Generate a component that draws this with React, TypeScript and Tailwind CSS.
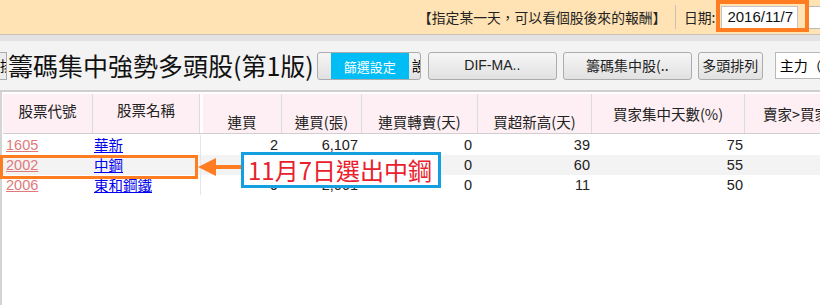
import React from "react";

const cjk = '"Noto Sans CJK TC", "Noto Sans CJK SC", sans-serif';
const num = '"Liberation Sans", "Noto Sans CJK TC", sans-serif';

const cols = "grid grid-cols-[90px_107px_3px_79px_80px_116px_114px_153px_1fr]";

function Btn({ children, w }: { children: React.ReactNode; w: string }) {
  return (
    <div
      className={`${w} shrink-0 h-[28px] flex items-center justify-center rounded-[3px] border border-[#acacac] bg-gradient-to-b from-[#f6f6f6] to-[#e1e1e1] text-[14px] text-[#222] whitespace-nowrap`}
      style={{ fontFamily: num }}
    >
      {children}
    </div>
  );
}

type Row = { code: string; name: string; a: string; b: string; c: string; d: string; e: string; bg: string };
const rows: Row[] = [
  { code: "1605", name: "華新", a: "2", b: "6,107", c: "0", d: "39", e: "75", bg: "bg-white" },
  { code: "2002", name: "中鋼", a: "", b: "", c: "0", d: "60", e: "55", bg: "bg-[#f3f3f3]" },
  { code: "2006", name: "東和鋼鐵", a: "9", b: "2,061", c: "0", d: "11", e: "50", bg: "bg-white" },
];

export default function App() {
  return (
    <div className="w-[820px] h-[305px] overflow-hidden bg-white relative" style={{ fontFamily: cjk }}>
      {/* top bar */}
      <div className="h-[35px] bg-[#ffe3b4] border-b border-[#c9c2b4] flex items-center pl-[418px] relative">
        <span className="text-[13.8px] text-[#222] whitespace-nowrap w-[248px] shrink-0">【指定某一天，可以看個股後來的報酬】</span>
        <div className="w-px h-[24px] bg-[#c9c2b4] ml-[9px] shrink-0" />
        <span className="text-[13.8px] text-[#222] ml-[8px] whitespace-nowrap shrink-0">日期:</span>
        <div className="ml-[6px] w-[77px] h-[23px] bg-white border border-[#c4c4c4] flex items-center pl-[5px] text-[15px] text-[#111] whitespace-nowrap shrink-0" style={{ fontFamily: num }}>
          2016/11/7
        </div>
        <div className="ml-[9px] w-[40px] h-[23px] bg-white border border-[#b9b9b9] shrink-0" />
        <div className="absolute left-[716px] top-0 w-[93px] h-[32px] border-[4px] border-[#ff7c20]" />
      </div>
      <div className="h-[6px] bg-[#e2e2e2]" />
      {/* toolbar */}
      <div className="h-[49px] bg-[#f3f3f3] flex items-center relative">
        <div className="w-[7px] shrink-0 h-[28px] overflow-hidden border border-l-0 border-[#acacac] bg-[#ececec] flex items-center justify-end">
          <span className="text-[14px] shrink-0 mr-[-8px]">排</span>
        </div>
        <span className="ml-[1px] shrink-0 text-[25px] leading-none text-[#111] whitespace-nowrap">籌碼集中強勢多頭股(第1版)</span>
        <div className="ml-[3px] shrink-0 w-[104px] h-[28px] rounded-[3px] border border-[#acacac] bg-gradient-to-b from-[#f6f6f6] to-[#e1e1e1] relative overflow-hidden flex items-center justify-end">
          <span className="text-[14px] mr-[-6px]">設</span>
          <div className="absolute left-[13px] top-0 w-[78px] h-[28px] bg-[#00bdf6] flex items-center justify-center text-white text-[13px] whitespace-nowrap">篩選設定</div>
        </div>
        <div className="ml-[7px] shrink-0"><Btn w="w-[129px]">DIF-MA..</Btn></div>
        <div className="ml-[6px] shrink-0"><Btn w="w-[129px]"><span style={{ fontFamily: cjk }}>籌碼集中股(..</span></Btn></div>
        <div className="ml-[6px] shrink-0"><Btn w="w-[65px]"><span style={{ fontFamily: cjk }}>多頭排列</span></Btn></div>
        <div className="ml-[12px] w-[60px] h-[27px] bg-white border border-[#b9b9b9] flex items-center pl-[4px] text-[14px] whitespace-nowrap shrink-0">主力（</div>
      </div>
      <div className="h-[2px] bg-[#cfcfcf]" />
      {/* table */}
      <div className="border-l-[2px] border-[#d4d4d4] h-[214px] pl-[1px] pt-[2px]">
        <div className={`${cols} h-[40px] text-[14.5px] text-[#222] border-b border-[#cfcfcf]`}>
          <div className="bg-[#fdeff3] border-r border-[#dcdcdc] flex justify-center pt-[6px]">股票代號</div>
          <div className="bg-[#fdeff3] border-r border-[#dcdcdc] flex justify-center pt-[5px]">股票名稱</div>
          <div className="bg-white" />
          <div className="bg-[#fdeff3] border-r border-[#dcdcdc] flex justify-center items-end pb-0">連買</div>
          <div className="bg-[#fdeff3] border-r border-[#dcdcdc] flex justify-center items-end pb-0">連買(張)</div>
          <div className="bg-[#fdeff3] border-r border-[#dcdcdc] flex justify-center items-end pb-0">連買轉賣(天)</div>
          <div className="bg-[#fdeff3] border-r border-[#dcdcdc] flex justify-center items-end pb-0">買超新高(天)</div>
          <div className="bg-[#fdeff3] border-r border-[#dcdcdc] flex justify-center items-center">買家集中天數(%)</div>
          <div className="bg-[#fdeff3] flex items-center pl-[18px] whitespace-nowrap overflow-hidden">賣家&gt;買家</div>
        </div>
        <div className="pt-[1px]">
          {rows.map((r) => (
            <div key={r.code} className={`${cols} h-[20px] text-[14.5px] leading-[20px] ${r.bg}`}>
              <div className="pl-[3px] text-[#e07a7a] underline" style={{ fontFamily: num }}>{r.code}</div>
              <div className="pl-[1px] text-[#0000ee] underline whitespace-nowrap">{r.name}</div>
              <div className="border-l border-[#e6e6e6]" />
              <div className="text-right pr-[4px] text-[#222]" style={{ fontFamily: num }}>{r.a}</div>
              <div className="text-right pr-[4px] text-[#222]" style={{ fontFamily: num }}>{r.b}</div>
              <div className="text-right pr-[6px] text-[#222]" style={{ fontFamily: num }}>{r.c}</div>
              <div className="text-right pr-[2px] text-[#222]" style={{ fontFamily: num }}>{r.d}</div>
              <div className="text-right pr-[2px] text-[#222]" style={{ fontFamily: num }}>{r.e}</div>
              <div />
            </div>
          ))}
        </div>
      </div>
      {/* annotations */}
      <div className="absolute left-0 top-[155px] w-[198px] h-[24px] border-[3px] border-[#ff7c20]" />
      <svg className="absolute left-[197px] top-[156px]" width="46" height="22" viewBox="0 0 46 22">
        <polygon points="1,11 19,2 19,20" fill="#ff7c20" />
        <rect x="18" y="9" width="27" height="4" fill="#ff7c20" />
      </svg>
      <div className="absolute left-[241px] top-[152px] w-[200px] h-[36px] border-[3px] border-[#14a0e0] bg-white flex items-center pl-[4px]">
        <span className="text-[24px] leading-none text-[#e8212c] whitespace-nowrap">11月7日選出中鋼</span>
      </div>
    </div>
  );
}
